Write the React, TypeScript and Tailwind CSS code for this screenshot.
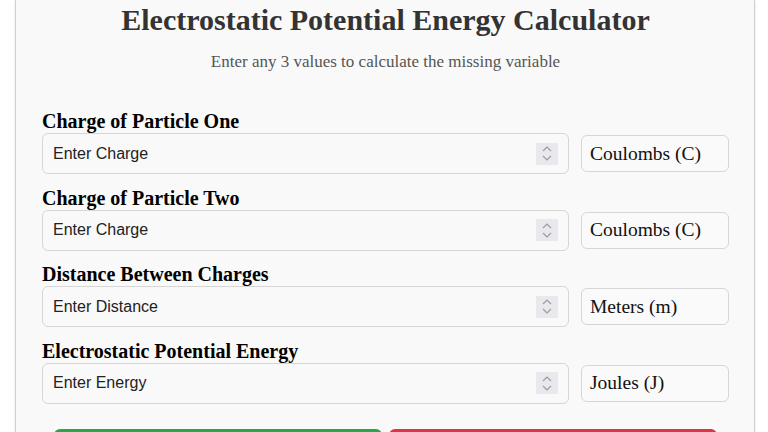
const fields = [
  { label: 'Charge of Particle One', placeholder: 'Enter Charge', unit: 'Coulombs (C)' },
  { label: 'Charge of Particle Two', placeholder: 'Enter Charge', unit: 'Coulombs (C)' },
  { label: 'Distance Between Charges', placeholder: 'Enter Distance', unit: 'Meters (m)' },
  { label: 'Electrostatic Potential Energy', placeholder: 'Enter Energy', unit: 'Joules (J)' },
];

const Spinner = () => (
  <div className="w-[22px] h-[22px] bg-[#e9e9ed] flex flex-col items-center justify-center gap-[3px]">
    <svg width="10" height="6" viewBox="0 0 10 6" fill="none">
      <path d="M1 5 L5 1 L9 5" stroke="#9a9aa2" strokeWidth="1.2" />
    </svg>
    <svg width="10" height="6" viewBox="0 0 10 6" fill="none">
      <path d="M1 1 L5 5 L9 1" stroke="#9a9aa2" strokeWidth="1.2" />
    </svg>
  </div>
);

export default function App() {
  return (
    <div className="min-h-screen bg-white" style={{ fontFamily: '"Liberation Serif", serif' }}>
      <div className="ml-[15px] w-[740px] bg-[#f9f9f9] border-x border-b border-[#d0d0d0] rounded-b-lg shadow-sm pl-[26px] pr-[25px] pb-6">
        {/* Header */}
        <h1 className="text-center font-bold text-[30px] leading-[36px] text-[#333] pt-[2px]">
          Electrostatic Potential Energy Calculator
        </h1>
        <p className="text-center text-[17px] leading-5 text-[#555] mt-[14px] mb-[38px]">
          Enter any 3 values to calculate the missing variable
        </p>

        {/* Fields */}
        <div className="flex flex-col gap-[12.5px]">
          {fields.map((f, i) => (
            <div key={i}>
              <label className="block font-bold text-[20px] leading-[23px] text-black">{f.label}</label>
              <div className="grid grid-cols-[1fr_148px] gap-3 items-center">
                <div className="h-[41px] flex items-center border border-[#d6d6d6] rounded-md bg-[#f9f9f9] pl-[10px] pr-[10px]">
                  <input
                    type="text"
                    placeholder={f.placeholder}
                    className="flex-1 bg-transparent outline-none text-[16px] text-[#222] placeholder:text-[#222]"
                    style={{ fontFamily: '"Liberation Sans", Arial, sans-serif' }}
                  />
                  <Spinner />
                </div>
                <div className="h-[37px] flex items-center border border-[#d6d6d6] rounded-md bg-[#fafafa] px-2 text-[19.5px] text-[#111]">
                  {f.unit}
                </div>
              </div>
            </div>
          ))}
        </div>

        {/* Buttons */}
        <div className="flex gap-[7px] px-3 mt-[25px]">
          <button className="flex-1 h-14 rounded-md bg-[#28a745] text-white text-[18px] font-bold">Calculate</button>
          <button className="flex-1 h-14 rounded-md bg-[#dc3545] text-white text-[18px] font-bold">Clear</button>
        </div>
      </div>
    </div>
  );
}
